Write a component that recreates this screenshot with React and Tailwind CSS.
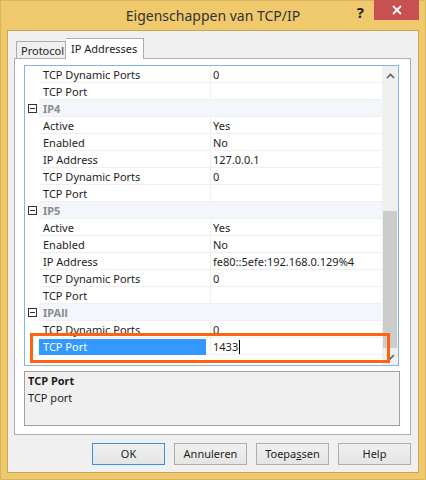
import React from 'react'

const ROWS = [
  { name: 'TCP Dynamic Ports', value: '0' },
  { name: 'TCP Port', value: '' },
  { group: 'IP4' },
  { name: 'Active', value: 'Yes' },
  { name: 'Enabled', value: 'No' },
  { name: 'IP Address', value: '127.0.0.1' },
  { name: 'TCP Dynamic Ports', value: '0' },
  { name: 'TCP Port', value: '' },
  { group: 'IP5' },
  { name: 'Active', value: 'Yes' },
  { name: 'Enabled', value: 'No' },
  { name: 'IP Address', value: 'fe80::5efe:192.168.0.129%4' },
  { name: 'TCP Dynamic Ports', value: '0' },
  { name: 'TCP Port', value: '' },
  { group: 'IPAll' },
  { name: 'TCP Dynamic Ports', value: '0' },
  { name: 'TCP Port', value: '1433', selected: true },
]

const FONT = { fontFamily: '"Segoe UI", "Noto Sans", "Liberation Sans", sans-serif' }

function Row({ row }) {
  if (row.group) {
    return (
      <div className="flex h-[17px]">
        <div className="w-[14px] flex items-center justify-center bg-white">
          {/* kotak minus */}
          <div className="w-[9px] h-[9px] border border-[#333] flex items-center justify-center">
            <div className="w-[5px] h-px bg-[#333]" />
          </div>
        </div>
        <div className="flex-1 h-[17px] bg-[#f3f6fb] border-b border-[#eef0f3] pl-[4px] text-[11px] leading-[18px] font-bold text-[#8c8c8c]">
          {row.group}
        </div>
      </div>
    )
  }
  return (
    <div className="flex h-[17px]">
      <div className="w-[14px] bg-white" />
      <div className="w-[171px] h-[17px] border-b border-[#f0f0f0] text-[11px] leading-[18px] text-[#1e1e1e]">
        {row.selected ? (
          <div className="w-[167px] h-[16px] mt-px bg-[#3399ff] text-white pl-[4px] leading-[16px]">{row.name}</div>
        ) : (
          <div className="pl-[4px]">{row.name}</div>
        )}
      </div>
      <div className="flex-1 h-[17px] border-l border-b border-[#f0f0f0] pl-[2px] text-[11px] leading-[18px] text-[#1e1e1e] flex items-start">
        {row.value}
        {row.selected && <span className="w-px h-[14px] mt-[2px] bg-black ml-px" />}
      </div>
    </div>
  )
}

export default function App() {
  return (
    <div style={FONT} className="w-[426px] h-[480px] bg-[#f0c96d] border border-[#d9b461] flex flex-col">
      {/* Title bar */}
      <div className="h-[29px] grid grid-cols-[1fr_auto_1fr]">
        <div />
        <div className="text-[14px] text-[#333] leading-[20px] pt-[5px]">Eigenschappen van TCP/IP</div>
        <div className="flex justify-end items-start pr-[6px]">
          <span className="text-[15px] font-bold text-[#222] leading-[18px] mt-[2px] mr-[10px]">?</span>
          <div className="w-[45px] h-[20px] bg-[#c75050] flex items-center justify-center -mt-px">
            <svg width="10" height="10" viewBox="0 0 10 10">
              <path d="M1 1 L9 9 M9 1 L1 9" stroke="white" strokeWidth="1.8" />
            </svg>
          </div>
        </div>
      </div>

      {/* Client area */}
      <div className="ml-[6px] w-[412px] h-[443px] bg-[#f0f0f0] border border-[#c9a55a] flex flex-col">
        {/* Tabs */}
        <div className="flex items-end h-[27px] pl-[8px] pt-[7px]">
          <div className="h-[17px] w-[50px] border border-b-0 border-[#adadad] bg-[#f0f0f0] text-[11px] leading-[17px] text-[#1e1e1e] pl-[4px]">
            Protocol
          </div>
          <div className="h-[21px] w-[78px] border border-b-0 border-l-0 border-[#adadad] bg-white text-[11px] leading-[19px] text-[#1e1e1e] pl-[5px] relative top-px z-10">
            IP Addresses
          </div>
        </div>

        {/* Tab panel */}
        <div className="ml-[6px] w-[397px] h-[377px] bg-white border border-[#adadad] pl-[9px] pt-[6px] flex flex-col">
          {/* Property grid */}
          <div className="relative w-[375px] h-[301px] border border-[#86b4e9] flex">
            <div className="flex-1 flex flex-col">
              {ROWS.map((row, i) => (
                <Row key={i} row={row} />
              ))}
            </div>
            {/* Scrollbar */}
            <div className="w-[16px] bg-[#f0f0f0] flex flex-col">
              <div className="h-[20px] flex items-center justify-center">
                <svg width="9" height="6" viewBox="0 0 9 6">
                  <path d="M1 5 L4.5 1.5 L8 5" stroke="#606060" strokeWidth="1.6" fill="none" />
                </svg>
              </div>
              <div className="h-[125px]" />
              <div className="h-[137px] bg-[#cdcdcd] mx-px" />
              <div className="flex-1 flex items-center justify-center">
                <svg width="9" height="6" viewBox="0 0 9 6">
                  <path d="M1 1 L4.5 4.5 L8 1" stroke="#606060" strokeWidth="1.6" fill="none" />
                </svg>
              </div>
            </div>
            {/* Oranje markering */}
            <div className="absolute left-[5px] top-[267px] w-[360px] h-[30px] border-[3px] border-[#ff6310]" />
          </div>

          {/* Beschrijving */}
          <div className="mt-[5px] w-[376px] h-[55px] bg-[#f0f0f0] border border-[#a0a0a0] px-[3px] text-[11px] leading-[17px] text-[#1e1e1e]">
            <div className="font-bold">TCP Port</div>
            <div>TCP port</div>
          </div>
        </div>

        {/* Buttons */}
        <div className="flex justify-end gap-[9px] pr-[7px] pt-[8px]">
          {['OK', 'Annuleren', 'Toepassen', 'Help'].map((b) => (
            <button
              key={b}
              className={`w-[73px] h-[22px] text-[11px] text-[#1e1e1e] bg-gradient-to-b from-[#f0f0f0] to-[#e5e5e5] border ${
                b === 'OK' ? 'border-[#3c8fe5]' : 'border-[#adadad]'
              }`}
            >
              {b === 'Toepassen' ? (
                <span>
                  Toepa<span className="underline">s</span>sen
                </span>
              ) : (
                b
              )}
            </button>
          ))}
        </div>
      </div>
    </div>
  )
}
